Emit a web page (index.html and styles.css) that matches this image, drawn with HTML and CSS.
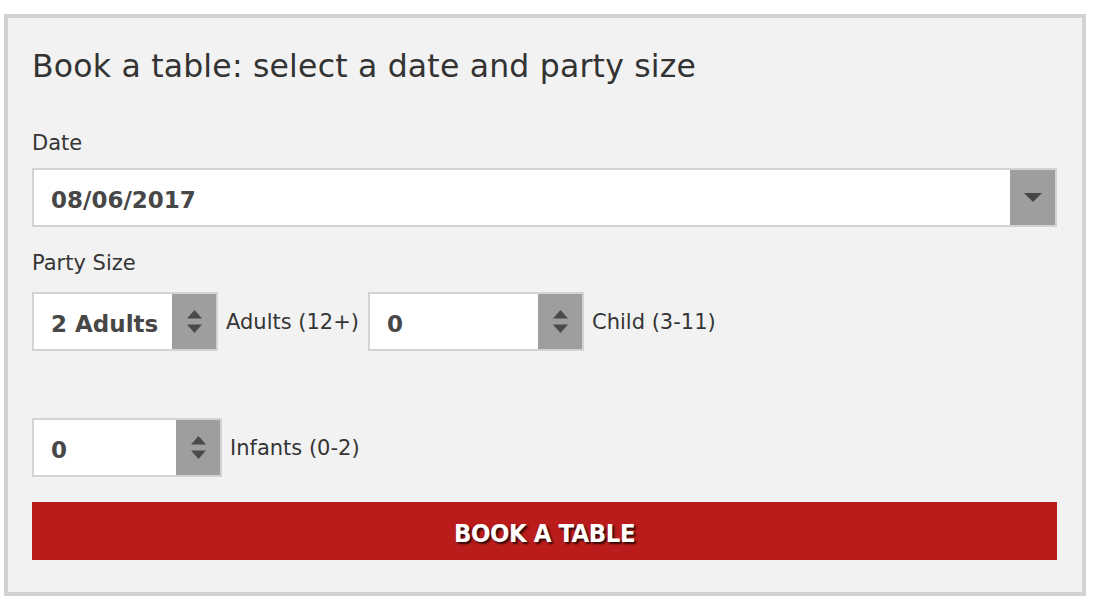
FILE: index.html
```html
<!DOCTYPE html>
<html lang="en">
<head>
<meta charset="utf-8">
<title>Book a table</title>
<link rel="stylesheet" href="styles.css">
</head>
<body>
<div class="panel">
  <h1 class="title">Book a table: select a date and party size</h1>

  <div class="label label-date">Date</div>
  <div class="field field-date">
    <span class="value">08/06/2017</span>
    <span class="btn">
      <svg width="18" height="9" viewBox="0 0 18 9"><path d="M0 0 L18 0 L9 9 Z" fill="#454545"/></svg>
    </span>
  </div>

  <div class="label label-party">Party Size</div>
  <div class="row row-first">
    <div class="field field-adults">
      <span class="value">2 Adults</span>
      <span class="btn">
        <svg width="15" height="23" viewBox="0 0 15 23"><path d="M7.5 0 L15 8.5 L0 8.5 Z M0 14.5 L15 14.5 L7.5 23 Z" fill="#4a4a4a"/></svg>
      </span>
    </div>
    <span class="row-label">Adults (12+)</span>
    <div class="field field-child">
      <span class="value">0</span>
      <span class="btn">
        <svg width="15" height="23" viewBox="0 0 15 23"><path d="M7.5 0 L15 8.5 L0 8.5 Z M0 14.5 L15 14.5 L7.5 23 Z" fill="#4a4a4a"/></svg>
      </span>
    </div>
    <span class="row-label">Child (3-11)</span>
  </div>

  <div class="row row-second">
    <div class="field field-infants">
      <span class="value">0</span>
      <span class="btn">
        <svg width="15" height="23" viewBox="0 0 15 23"><path d="M7.5 0 L15 8.5 L0 8.5 Z M0 14.5 L15 14.5 L7.5 23 Z" fill="#4a4a4a"/></svg>
      </span>
    </div>
    <span class="row-label">Infants (0-2)</span>
  </div>

  <button class="book">BOOK A TABLE</button>
</div>
</body>
</html>
```

FILE: styles.css
```css
html, body {
  margin: 0;
  padding: 0;
  background: #ffffff;
}

body {
  font-family: "DejaVu Sans", "Liberation Sans", sans-serif;
  color: #353535;
}

.panel {
  margin: 14px 0 0 4px;
  width: 1025px;
  border: 4px solid #d2d2d2;
  background: #f2f2f2;
  padding: 28px 25px 32px 24px;
}

.title {
  margin: 0 0 44px 0;
  font-size: 31.5px;
  line-height: 40px;
  font-weight: normal;
  color: #333333;
  letter-spacing: 0.2px;
}

.label {
  font-size: 21px;
  line-height: 26px;
  color: #353535;
}

.label-date {
  margin-bottom: 12px;
}

.label-party {
  margin-bottom: 16px;
}

.field {
  display: flex;
  align-items: stretch;
  box-sizing: border-box;
  height: 59px;
  border: 2px solid #d3d3d3;
  background: #ffffff;
}

.field .value {
  flex: 1;
  display: flex;
  align-items: center;
  padding: 5px 0 0 17px;
  font-size: 23px;
  font-weight: bold;
  color: #474747;
}

.field .btn {
  width: 44px;
  background: #9e9e9e;
  display: flex;
  align-items: center;
  justify-content: center;
}

.field-date {
  margin-bottom: 23px;
}

.field-date .btn {
  width: 45px;
}

.row {
  display: flex;
  align-items: center;
}

.row-first {
  margin-bottom: 67px;
}

.row-second {
  margin-bottom: 25px;
}

.row-label {
  font-size: 21px;
  color: #353535;
  margin: 0 9px 0 8px;
}

.field-adults {
  width: 186px;
}

.field-child {
  width: 216px;
}

.field-infants {
  width: 190px;
}

.book {
  display: block;
  width: 100%;
  height: 58px;
  border: none;
  background: #b91c1a;
  color: #ffffff;
  font-family: "DejaVu Sans Condensed", "DejaVu Sans", sans-serif;
  font-weight: bold;
  font-size: 25.5px;
  letter-spacing: -0.5px;
  text-shadow: 2px 2px 2px rgba(0, 0, 0, 0.75);
  padding: 4px 0 0 0;
  cursor: pointer;
}
```
